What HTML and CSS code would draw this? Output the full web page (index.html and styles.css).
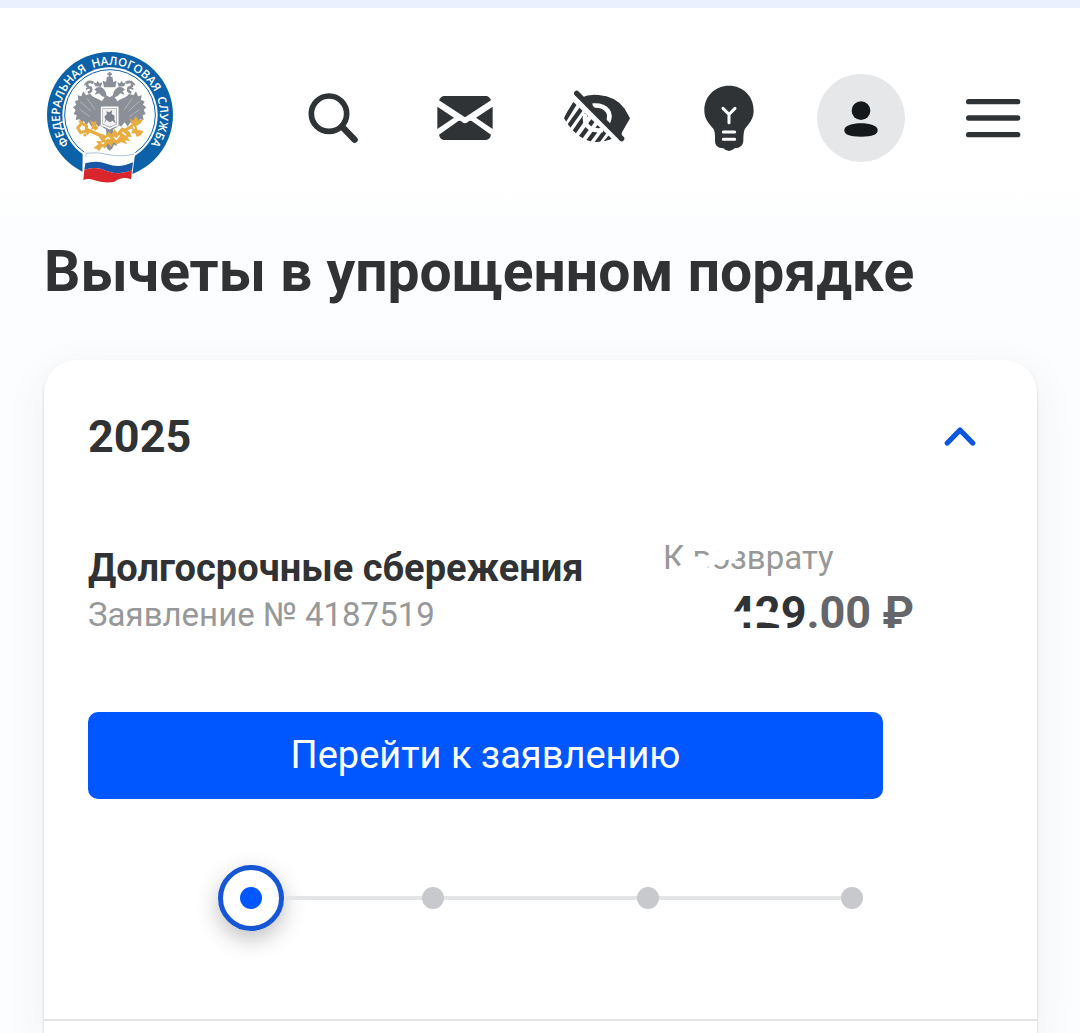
FILE: index.html
```html
<!DOCTYPE html>
<html lang="ru">
<head>
    <meta charset="UTF-8">
    <meta name="viewport" content="width=device-width, initial-scale=1.0">
    <title>Вычеты в упрощенном порядке</title>
    <link rel="stylesheet" href="styles.css">
</head>
<body>
    <header class="header">
        <a class="logo" href="#" aria-label="Федеральная налоговая служба">
            <svg viewBox="42 36 396 396">
                <defs>
                    <path id="ring" d="M240 375 A150 150 0 0 1 240 75 A150 150 0 0 1 240 375"/>
                </defs>
                <circle cx="240" cy="225" r="189" fill="#0b62a8"/>
                <circle cx="240" cy="225" r="143" fill="#fff"/>
                <circle cx="240" cy="225" r="136" fill="none" stroke="#0b62a8" stroke-width="3"/>
                <text class="logo-text"><textPath href="#ring" startOffset="50%">ФЕДЕРАЛЬНАЯ&nbsp; НАЛОГОВАЯ&nbsp; СЛУЖБА</textPath></text>
                <!-- eagle -->
                <g fill="#8b8f98">
                    <path d="M222 192 C212 172 190 178 181 161 L168 166 L160 154 L154 169 L143 166 L145 180 L134 184 L139 194 L129 202 L137 210 L131 222 L140 226 L137 240 L149 238 L151 252 L162 243 L168 257 L176 246 L185 260 L194 247 L205 260 L222 246Z"/>
                    <path d="M256 192 C266 172 288 178 297 161 L310 166 L318 154 L324 169 L335 166 L333 180 L344 184 L339 194 L349 202 L341 210 L347 222 L338 226 L341 240 L329 238 L327 252 L316 243 L310 257 L302 246 L293 260 L284 247 L273 260 L256 246Z"/>
                    <path d="M212 196 Q214 182 224 172 Q212 168 207 160 L194 164 L200 154 L193 149 Q200 138 214 142 Q228 150 229 166 L239 172 L249 166 Q250 150 264 142 Q278 138 285 149 L278 154 L284 164 L271 160 Q266 168 254 172 Q264 182 266 196 V258 L250 268 L248 290 L262 318 L252 314 L246 326 L239 332 L232 326 L226 314 L216 318 L230 290 L228 268 L212 258Z"/>
                    <path d="M222 142 L218 122 L228 126 L231 110 H236 V105 H232 V100 H236 V96 H242 V100 H246 V105 H242 V110 H247 L250 126 L260 122 L256 142Z"/>
                    <path d="M196 139 L190 127 L199 130 L203 122 L208 130 L217 127 L213 140Z M266 140 L262 127 L270 130 L275 122 L279 130 L288 127 L282 139Z"/>
                </g>
                <g fill="none" stroke="#8b8f98" stroke-width="8">
                    <path d="M174 158 Q188 154 182 143 Q170 142 171 130 Q178 122 190 129 M304 158 Q290 154 296 143 Q308 142 307 130 Q300 122 288 129"/>
                    <path d="M163 135 L176 123 M315 135 L302 123 M168 148 L180 142 M310 148 L298 142" stroke-width="5"/>
                </g>
                <path d="M150 184 L183 214 M149 208 L180 230 M171 175 L196 210 M328 184 L295 214 M329 208 L298 230 M307 175 L282 210" stroke="#fff" stroke-width="1"/>
                <path d="M215 202 H263 V253 Q263 258 254 258 L239 266 L224 258 Q215 258 215 253Z" fill="#8b8f98" stroke="#fff" stroke-width="5"/>
                <path d="M219 206 H259 V252 L239 260 L219 252Z" fill="#f2f2f4"/>
                <path d="M223 230 L231 222 L229 214 L238 217 L246 211 L245 222 L254 227 L253 238 L258 251 L248 242 L240 247 L229 240 L222 251 L227 238Z" fill="#7c818b"/>
                <!-- key and caduceus -->
                <g fill="none" stroke="#e8ad42" stroke-linejoin="round">
                    <path d="M155 250 L143 263 L152 278 L168 273 L170 258Z" stroke-width="9"/>
                    <path d="M169 268 L210 286 L262 304" stroke-width="10"/>
                    <path d="M208 322 L258 288 L325 246" stroke-width="8"/>
                    <path d="M148 248 L154 242 M162 282 L168 288 M178 273 L170 282" stroke-width="8"/>
                </g>
                <g fill="#e8ad42">
                    <path d="M180 241 L190 246 L200 243 L198 254 L205 264 L196 272 L190 266 L183 270 L187 257Z"/>
                    <path d="M206 290 L218 281 L226 290 L236 275 L245 283 L254 267 L262 278 L275 262 L287 266 L299 276 L305 291 L292 290 L300 304 L285 301 L291 313 L274 306 L262 313 L251 307 L243 320 L233 310 L225 326 L216 319 L208 334 L199 326 L190 325 L205 312 L198 303 L216 304Z"/>
                    <path d="M298 234 L309 242 L318 228 L325 241 L340 238 L330 252 L319 257 L322 269 L341 273 L333 285 L321 291 L315 280 L303 280 L309 268 L295 263 L306 252Z"/>
                </g>
                <path d="M226 299 L234 292 L240 298 M252 291 L259 298 L269 286 M277 277 L288 286 M309 259 L314 266 M215 311 L223 308" fill="none" stroke="#fff" stroke-width="4"/>
                <!-- flag -->
                <path d="M158 337 L316 337 L304 425 Q282 410 256 425 Q228 437 200 425 Q178 417 157 425Z" fill="#fff"/>
                <path d="M168 350 Q166 344 170 340 Q206 336 229 343 Q273 352 312 342" fill="none" stroke="#8ba6c8" stroke-width="2"/>
                <path d="M166 370 Q199 359 232 372 Q268 386 309 367 L306 391 Q267 407 230 393 Q199 378 163 389Z" fill="#1757a5"/>
                <path d="M163 389 Q199 378 230 393 Q267 407 306 391 L303 418 Q277 407 252 426 Q217 430 194 421 Q176 414 160 420Z" fill="#d9262c"/>
            </svg>
        </a>
        <nav class="nav">
            <button class="nav-btn" type="button" aria-label="Поиск">
                <svg viewBox="-3 12 264 264" fill="none" stroke="#303335">
                    <circle cx="117" cy="131" r="53" stroke-width="17"/>
                    <path d="M157 171 L194 209" stroke-width="19" stroke-linecap="round"/>
                </svg>
            </button>
            <button class="nav-btn" type="button" aria-label="Сообщения">
                <svg viewBox="393 12 264 264" fill="#303335">
                    <path d="M461 78 H590 Q599 80 603 91 L525 142 L447 91 Q451 80 461 78Z"/>
                    <path d="M442 110 L492 143 L442 177Z M608 110 L558 143 L608 177Z"/>
                    <path d="M447 194 L505 153 Q514 150 517 157 Q525 163 533 157 Q536 150 545 153 L603 194 Q600 208 588 210 H462 Q450 208 447 194Z"/>
                </svg>
            </button>
            <button class="nav-btn" type="button" aria-label="Версия для слабовидящих">
                <svg viewBox="9 12 264 264">
                    <clipPath id="eye-lower">
                        <path d="M42 145 Q50 119 68 94 L186 207 Q157 218 128 215 Q78 207 42 145Z"/>
                    </clipPath>
                    <path d="M92 84 Q116 72 145 75 Q196 78 224 116 L240 145 L216 187 L212 206Z" fill="#303335"/>
                    <path d="M128 107 Q158 104 173 122 Q183 136 174 157" fill="none" stroke="#fff" stroke-width="14"/>
                    <path d="M80 70 L215 206" stroke="#303335" stroke-width="16" stroke-linecap="round"/>
                    <g clip-path="url(#eye-lower)" fill="none">
                        <path d="M39 158 L80 92 M50 178 L100 108 M67 194 L122 115 M86 210 L146 128 M112 217 L160 152 M139 220 L174 172 M163 222 L194 184" stroke="#303335" stroke-width="13"/>
                        <path d="M106 131 Q99 160 120 175 Q137 184 158 180" stroke="#fff" stroke-width="13"/>
                    </g>
                </svg>
            </button>
            <button class="nav-btn" type="button" aria-label="Подсказки">
                <svg viewBox="405 12 264 264">
                    <path d="M537 47 C580 47 611 79 611 122 C611 146 598 160 585 176 Q580 183 580 213 Q579 228 565 233 L554 235 Q537 251 520 235 L508 233 Q495 228 495 213 Q496 183 490 176 C476 160 463 146 463 122 C463 79 494 47 537 47Z" fill="#303335"/>
                    <path d="M519 115 L537 133 L555 115 M537 133 V158 M520 186 H554 M520 208 H554" fill="none" stroke="#fff" stroke-width="9" stroke-linecap="round"/>
                </svg>
            </button>
            <button class="nav-btn avatar" type="button" aria-label="Профиль">
                <svg viewBox="51 42 264 264" fill="#15181a">
                    <circle cx="183" cy="152" r="28"/>
                    <path d="M133 210 C133 197 157 190 183 190 C209 190 233 197 233 210 C233 224 218 230 183 230 C148 230 133 224 133 210Z"/>
                </svg>
            </button>
            <button class="nav-btn" type="button" aria-label="Меню">
                <svg viewBox="447 42 264 264">
                    <path d="M506 125 H653 M506 174 H653 M506 224 H653" stroke="#303335" stroke-width="16" stroke-linecap="round"/>
                </svg>
            </button>
        </nav>
    </header>

    <main class="content">
        <h1>Вычеты в упрощенном порядке</h1>

        <section class="card">
            <div class="year">
                <h2>2025</h2>
                <button class="toggle" type="button" aria-label="Свернуть" aria-expanded="true">
                    <svg viewBox="141 192 198 198">
                        <path d="M202 309 L240 270 L278 309" fill="none" stroke="#0d57e0" stroke-width="16" stroke-linecap="round" stroke-linejoin="round"/>
                    </svg>
                </button>
            </div>

            <div class="deduction">
                <div class="info">
                    <div class="about">
                        <h3>Долгосрочные сбережения</h3>
                        <p class="muted">Заявление № 4187519</p>
                    </div>
                    <div class="refund">
                        <p class="muted">К возврату</p>
                        <p class="amount">429<span class="cents">.00 ₽</span></p>
                        <!-- brush strokes that hide part of the sum -->
                        <svg class="strokes" viewBox="0 0 300 130">
                            <path d="M38 50 L56 40 Q66 40 74 37 Q84 31 97 32 M52 45 L66 42" stroke-width="11"/>
                            <path d="M62 95 H128 L142 98" stroke-width="11"/>
                        </svg>
                    </div>
                </div>

                <a class="main-btn" href="#">Перейти к заявлению</a>

                <ol class="steps">
                    <li class="step active" aria-current="step"></li>
                    <li class="step second"></li>
                    <li class="step third"></li>
                    <li class="step fourth"></li>
                </ol>
            </div>
        </section>
    </main>
</body>
</html>
```
FILE: styles.css
```css
* {
    box-sizing: border-box;
}
body {
    font-family: Roboto, "Liberation Sans", sans-serif;
    background-color: #fcfdfe;
    color: #303234;
    margin: 0;
    min-height: 100vh;
    border-top: 8px solid #eaf0fd;
    display: flex;
    flex-direction: column;
}
h1, h2, h3, p {
    margin: 0;
}
button {
    background: none;
    border: none;
    padding: 0;
    cursor: pointer;
}
svg {
    display: block;
    width: 100%;
    height: 100%;
}

/* Header */
.header {
    display: flex;
    justify-content: space-between;
    align-items: center;
    padding: 44px 43px 44px 44px;
    background: linear-gradient(#fff 80%, #fcfdfe);
}
.logo {
    width: 132px;
    height: 132px;
}
.logo-text {
    font-family: "Open Sans", sans-serif;
    font-size: 35px;
    font-weight: 600;
    fill: #fff;
    text-anchor: middle;
}
.nav {
    display: flex;
    gap: 44px;
}
.nav-btn {
    width: 88px;
    height: 88px;
    border-radius: 50%;
}
.avatar {
    background-color: #e6e7e9;
}

/* Card */
.content {
    flex: 1;
    display: flex;
    flex-direction: column;
    padding: 0 43px 0 44px;
}
h1 {
    font-size: 57px;
    line-height: 88px;
    margin-bottom: 44px;
}
.card {
    flex: 1;
    background-color: #fff;
    border-radius: 32px 32px 0 0;
    box-shadow: 0 2px 3px rgba(40, 50, 60, 0.2), 0 12px 44px rgba(40, 60, 100, 0.07);
}
.year {
    display: flex;
    justify-content: space-between;
    align-items: center;
    padding: 44px 44px 0;
}
h2 {
    font-size: 45px;
    line-height: 66px;
}
.toggle {
    width: 66px;
    height: 66px;
}
.deduction {
    padding: 66px 154px 88px 44px;
    border-bottom: 2px solid #e1e3e6;
}
.info {
    display: grid;
    grid-template-columns: 1fr 220px;
    white-space: nowrap;
    margin-bottom: 66px;
}
h3 {
    font-size: 38px;
    line-height: 44px;
    margin: 10px 0 3px;
}
.muted {
    font-size: 33px;
    line-height: 44px;
    color: #979899;
}
.refund {
    position: relative;
}
.amount {
    font-size: 45px;
    font-weight: bold;
    line-height: 66px;
    padding-left: 66px;
}
.cents {
    color: #646669;
}
.strokes {
    position: absolute;
    left: -22px;
    top: -14px;
    width: 300px;
    height: 130px;
    fill: none;
    stroke: #fff;
}
.main-btn {
    display: block;
    background-color: #0057ff;
    color: #fff;
    font-size: 38px;
    line-height: 87px;
    text-align: center;
    text-decoration: none;
    border-radius: 10px;
}

/* Steps */
.steps {
    display: flex;
    align-items: center;
    list-style: none;
    margin: 66px 20px 0 130px;
    padding: 0;
}
.step {
    display: flex;
    align-items: center;
}
.step::after {
    content: "";
    width: 22px;
    height: 22px;
    border-radius: 50%;
    background-color: #c8c9cc;
}
.step::before {
    content: "";
    flex: 1;
    height: 4px;
    background-color: #e4e5e7;
}
.second {
    flex: 160;
}
.third {
    flex: 215;
}
.fourth {
    flex: 204;
}
.active {
    width: 66px;
    height: 66px;
    justify-content: center;
    border: 5px solid #1555d6;
    border-radius: 50%;
    box-shadow: 0 8px 22px rgba(0, 0, 0, 0.25);
}
.active::before {
    display: none;
}
.active::after {
    background-color: #0057ff;
}
```
